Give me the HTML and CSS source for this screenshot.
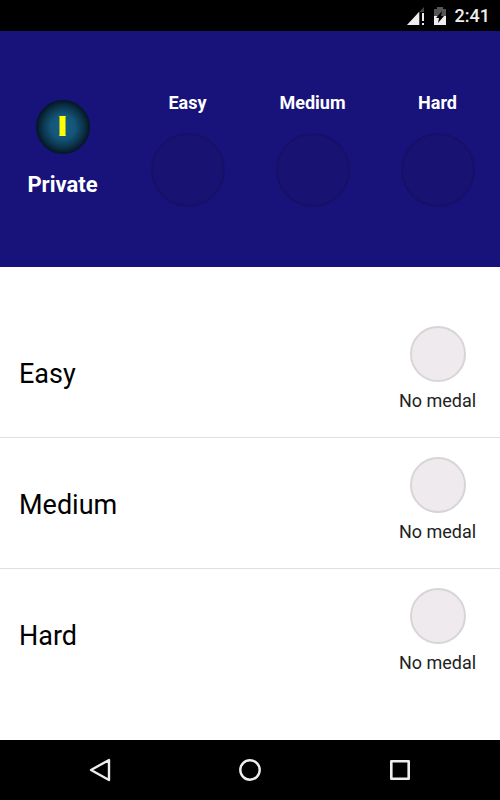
FILE: index.html
```html
<!DOCTYPE html>
<html lang="en">
<head>
    <meta charset="UTF-8">
    <meta name="viewport" content="width=device-width, initial-scale=1.0">
    <title>Medals</title>
    <link rel="stylesheet" href="styles.css">
</head>
<body>
    <div class="status-bar">
        <svg width="19" height="18" viewBox="0 0 19 18">
            <path d="M18 0V18H1Z" fill="#444"/>
            <path d="M13 5V18H1Z" fill="#eee"/>
            <path d="M14 5H19V18H14Z" fill="#000"/>
            <path d="M16 6H18V14H16ZM16 16H18V18H16Z" fill="#eee"/>
        </svg>
        <svg width="12" height="18" viewBox="0 0 12 18">
            <path d="M3 0H9V2H12V9H0V2H3Z" fill="#555"/>
            <path d="M0 9H12V18H0Z" fill="#eee"/>
            <path d="M8 4L2 11H5L4 16L10 9H7Z" fill="#000"/>
        </svg>
        <span>2:41</span>
    </div>

    <header class="summary">
        <div class="rank">
            <div class="rank-badge">
                <svg width="54" height="54" viewBox="0 0 54 54">
                    <path d="M23 16H30L29.5 17V35L30 36H23L23.5 35V17Z" fill="#ffff00"/>
                </svg>
            </div>
            <h1>Private</h1>
        </div>
        <div class="level">
            <h2>Easy</h2>
            <div class="slot"></div>
        </div>
        <div class="level">
            <h2>Medium</h2>
            <div class="slot"></div>
        </div>
        <div class="level">
            <h2>Hard</h2>
            <div class="slot"></div>
        </div>
    </header>

    <main>
        <ul class="levels">
            <li>
                <span class="name">Easy</span>
                <div class="medal"><div class="medal-icon"></div>No medal</div>
            </li>
            <li>
                <span class="name">Medium</span>
                <div class="medal"><div class="medal-icon"></div>No medal</div>
            </li>
            <li>
                <span class="name">Hard</span>
                <div class="medal"><div class="medal-icon"></div>No medal</div>
            </li>
        </ul>
    </main>

    <nav class="nav-bar">
        <button type="button" aria-label="Back">
            <svg width="24" height="24" viewBox="0 0 24 24">
                <path d="M21 2V22L3 12Z" fill="none" stroke="#eee" stroke-width="2.4" stroke-linejoin="round"/>
            </svg>
        </button>
        <button type="button" aria-label="Home">
            <svg width="24" height="24" viewBox="0 0 24 24">
                <circle cx="12" cy="12" r="9.7" fill="none" stroke="#eee" stroke-width="2.4"/>
            </svg>
        </button>
        <button type="button" aria-label="Recent apps">
            <svg width="24" height="24" viewBox="0 0 24 24">
                <rect x="3.3" y="3.3" width="17.4" height="17.4" fill="none" stroke="#eee" stroke-width="2.6" stroke-linejoin="round"/>
            </svg>
        </button>
    </nav>
</body>
</html>
```

FILE: styles.css
```css
* {
    box-sizing: border-box;
}
body {
    font-family: Roboto, sans-serif;
    background-color: white;
    color: black;
    margin: 0;
    min-height: 100vh;
    display: flex;
    flex-direction: column;
}
h1, h2 {
    margin: 0;
}
.status-bar {
    display: flex;
    justify-content: flex-end;
    align-items: center;
    gap: 9px;
    padding: 7px 10px 6px;
    background-color: black;
    color: #eee;
    font-size: 18px;
    font-weight: 500;
    line-height: 18px;
}
.summary {
    display: grid;
    grid-template-columns: repeat(4, 1fr);
    align-items: center;
    padding: 60px 0;
    background-color: #18127b;
    color: white;
}
.rank, .level {
    display: flex;
    flex-direction: column;
    align-items: center;
}
.rank {
    gap: 17px;
}
.rank-badge {
    width: 54px;
    height: 54px;
    border-radius: 50%;
    background: radial-gradient(circle closest-side, #155f85 0%, #145578 45%, #0b3148 78%, #041420 100%);
}
.rank h1 {
    font-size: 22px;
    line-height: 28px;
}
.level {
    gap: 18px;
}
.level h2 {
    font-size: 18px;
    line-height: 24px;
}
.slot {
    width: 74px;
    height: 74px;
    border: 2px solid #161069;
    border-radius: 50%;
    background-color: #181272;
}
main {
    flex: 1;
    padding-top: 40px;
}
.levels {
    list-style: none;
    margin: 0;
    padding: 0;
}
.levels li {
    display: grid;
    grid-template-columns: 3fr 1fr;
    align-items: center;
    padding: 19px 0 24px;
    border-bottom: 1px solid #e0e0e0;
}
.levels li:last-child {
    border-bottom: none;
}
.name {
    padding: 8px 0 0 19px;
    font-size: 27px;
    line-height: 36px;
}
.medal {
    display: flex;
    flex-direction: column;
    align-items: center;
    gap: 7px;
    font-size: 18px;
    line-height: 24px;
    color: #222;
}
.medal-icon {
    width: 56px;
    height: 56px;
    border: 2px solid #d8d5d9;
    border-radius: 50%;
    background-color: #eeeaee;
}
.nav-bar {
    display: flex;
    justify-content: center;
    align-items: center;
    height: 60px;
    background-color: black;
}
.nav-bar button {
    display: flex;
    justify-content: center;
    width: 30%;
    padding: 0;
    border: none;
    background: none;
    cursor: pointer;
}
```
